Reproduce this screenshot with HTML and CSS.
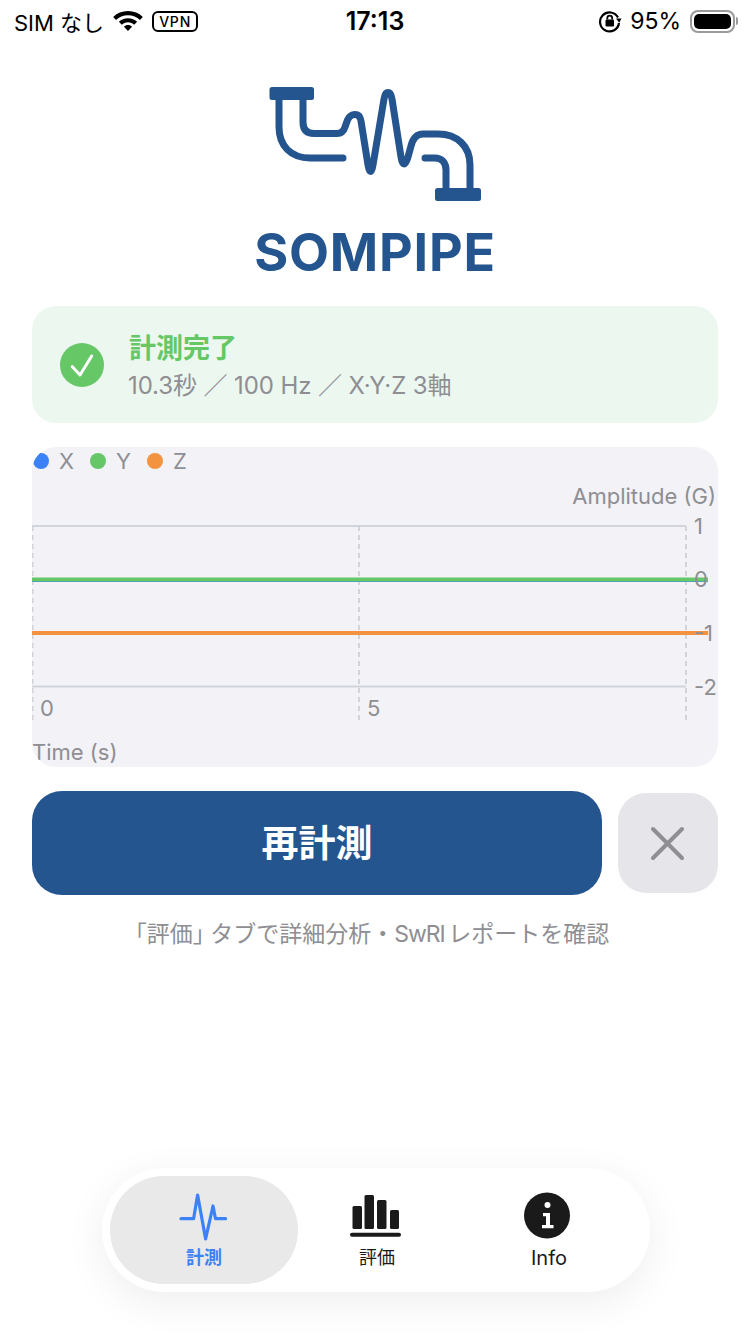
FILE: index.html
```html
<!DOCTYPE html>
<html lang="ja">
<head>
<meta charset="utf-8">
<title>SOMPIPE</title>
<link rel="stylesheet" href="styles.css">
</head>
<body>
<div class="phone">
  <header class="status">
    <div class="status-left">
      <span class="carrier">SIM なし</span>
      <svg class="wifi" viewBox="1 3 28 18.500"><path d="M15 3C9.600 3 4.800 5 1.200 8.400l2.600 2.800C6.700 8.400 10.600 6.800 15 6.800s8.300 1.600 11.200 4.400l2.600-2.800C25.200 5 20.400 3 15 3z"/><path d="M15 9.600c-3.300 0-6.300 1.300-8.500 3.400l2.700 2.800c1.500-1.400 3.500-2.300 5.800-2.300s4.300.9 5.800 2.300l2.700-2.800c-2.200-2.100-5.200-3.400-8.500-3.400z"/><path d="M15 16c-1.500 0-2.800.6-3.800 1.500L15 21.500l3.800-4c-1-.9-2.300-1.500-3.800-1.500z"/></svg>
      <span class="vpn">VPN</span>
    </div>
    <div class="clock">17:13</div>
    <div class="status-right">
      <svg class="rotlock" viewBox="0 0 24 24"><path class="rot-ring" d="M20 8.500A9.500 9.500 0 1 0 21 14"/><path class="rot-head" d="M18 9.500h5.500l-2.200 4.200z"/><rect class="rot-body" x="7.500" y="10.500" width="8.500" height="7" rx="1.200"/><path class="rot-ring thin" d="M9.300 10.500V9a2.450 2.450 0 0 1 4.900 0v1.500"/></svg>
      <span class="pct">95%</span>
      <div class="battery"><div class="battery-fill"></div></div>
      <div class="battery-nub"></div>
    </div>
  </header>

  <main class="content">
    <svg class="logo" viewBox="269 87 212 114">
      <rect class="logo-flange" x="269.500" y="87" width="44.500" height="13" rx="2.500"/>
      <rect class="logo-flange" x="435" y="188" width="46" height="13" rx="2.500"/>
      <path class="logo-line" d="M279 98V127C279 146 291 158 310 158H343"/>
      <path class="logo-line" d="M303 98V122Q303 133.500 314 133.500H337Q343 133.500 345 127L347.500 120Q350 114.500 355 114.500Q360 114.500 361 121L368 165Q369 171.500 370.500 171.500Q372 171.500 373 165L384 99Q385 92.500 388 92.500Q391 92.500 392 99L401 157Q402 164 404 164Q406 164 408 157L411 146Q414 134 423 134H438C457 134 470 146 470 165V190"/>
      <path class="logo-line" d="M425 158H435C442 158 446 163 446 170V190"/>
    </svg>
    <h1 class="brand">SOMPIPE</h1>

    <section class="result">
      <svg class="check" viewBox="0 0 44 44"><circle class="check-bg" cx="22" cy="22" r="22"/><path class="check-mark" d="M12.300 23.700L20 32L31.700 13"/></svg>
      <div class="result-text">
        <div class="result-title">計測完了</div>
        <div class="result-sub">10.3秒 ／ 100 Hz ／ X·Y·Z 3軸</div>
      </div>
    </section>

    <section class="chart">
      <div class="legend">
        <span class="legend-item"><i class="dot dot-x"></i>X</span>
        <span class="legend-item"><i class="dot dot-y"></i>Y</span>
        <span class="legend-item"><i class="dot dot-z"></i>Z</span>
      </div>
      <svg class="plot" viewBox="0 0 686 320">
        <path class="grid-solid" d="M0 79H654M0 239.500H654"/>
        <path class="grid-dash" d="M.5 79V275M327 79V275M654 79V275"/>
        <path class="trace trace-x" d="M0 133H676"/>
        <path class="trace trace-y" d="M0 132.500H676"/>
        <path class="trace trace-z" d="M0 186H676"/>
        <text class="axis-title" x="684" y="57" text-anchor="end">Amplitude (G)</text>
        <text class="axis-num" x="662" y="87">1</text>
        <text class="axis-num" x="662" y="140">0</text>
        <text class="axis-num" x="662" y="194">-1</text>
        <text class="axis-num" x="662" y="248">-2</text>
        <text class="axis-num" x="8" y="269">0</text>
        <text class="axis-num" x="335" y="269">5</text>
        <text class="axis-title" x="0" y="313">Time (s)</text>
      </svg>
    </section>

    <div class="actions">
      <button class="primary">再計測</button>
      <button class="close" aria-label="閉じる"><svg viewBox="0 0 100 100"><path d="M35 36L64 65M64 36L35 65"/></svg></button>
    </div>
    <p class="hint">「評価<span class="hint-close">」</span>タブで詳細分析・<span class="hint-latin">SwRI</span> レポートを確認</p>
  </main>

  <nav class="tabs">
    <div class="tab tab-active">
      <svg class="tab-icon" viewBox="0 0 50 50"><path class="pulse" d="M2 26.700H14.600L18.600 3L26.600 47L34 14L36.500 26.700H46.600"/></svg>
      <span class="tab-label">計測</span>
    </div>
    <div class="tab tab-mid">
      <svg class="tab-icon" viewBox="0 0 56 50"><rect x="3.500" y="14" width="9.500" height="23" rx="1.500"/><rect x="15.500" y="3" width="9.500" height="34" rx="1.500"/><rect x="28" y="8" width="9.500" height="29" rx="1.500"/><rect x="41" y="18" width="9" height="19" rx="1.500"/><rect x="1" y="40.700" width="51" height="4" rx="2"/></svg>
      <span class="tab-label">評価</span>
    </div>
    <div class="tab tab-end">
      <svg class="tab-icon" viewBox="0 0 50 50"><circle cx="23" cy="23.500" r="23"/><circle class="info-i" cx="23.500" cy="13" r="3"/><path class="info-i" d="M19 21h7v12h3.500v3.300H18V33h4v-8.700h-3z"/></svg>
      <span class="tab-label">Info</span>
    </div>
  </nav>
</div>
</body>
</html>
```

FILE: styles.css
```css
* { box-sizing: border-box; }
html, body { margin: 0; padding: 0; background: #fff; }
body { font-family: Inter, "Noto Sans CJK JP", sans-serif; color: #000; }
.phone { width: 750px; height: 1334px; display: flex; flex-direction: column; overflow: hidden; position: relative; }

.status { height: 42px; display: grid; grid-template-columns: 1fr auto 1fr; align-items: center; padding: 0 12px 0 14px; flex: none; }
.status-left { display: flex; align-items: center; }
.carrier { font-size: 22px; }
.wifi { width: 30px; height: 22px; margin-left: 9px; fill: #000; }
.vpn { margin-left: 9px; width: 46px; height: 21px; border: 2px solid #000; border-radius: 6px; font-size: 14px; font-weight: 500; line-height: 17px; text-align: center; letter-spacing: .8px; }
.clock { font-size: 25px; font-weight: 600; margin-right: 2px; }
.status-right { display: flex; align-items: center; justify-content: flex-end; }
.rotlock { width: 24px; height: 24px; margin-right: 8px; }
.rot-ring { fill: none; stroke: #000; stroke-width: 2.200; }
.rot-ring.thin { stroke-width: 1.800; }
.rot-head, .rot-body { fill: #000; }
.pct { font-size: 23px; margin-right: 9px; }
.battery { width: 45px; height: 23px; border: 2px solid #9a9a9a; border-radius: 8px; padding: 2px; }
.battery-fill { width: 100%; height: 100%; background: #000; border-radius: 5px; }
.battery-nub { width: 2px; height: 8px; background: #9a9a9a; border-radius: 0 2px 2px 0; margin-left: 1px; }

.content { padding: 0 32px; display: flex; flex-direction: column; flex: none; }
.logo { display: block; width: 212px; height: 114px; margin: 45px auto 0 237px; }
.logo-flange { fill: #25558f; }
.logo-line { fill: none; stroke: #25558f; stroke-width: 7; stroke-linecap: round; stroke-linejoin: round; }
.brand { margin: 22px 0 0; height: 60px; line-height: 60px; text-align: center; font-family: Inter, sans-serif; font-size: 52px; font-weight: 700; letter-spacing: .8px; color: #25558f; }

.result { margin-top: 23px; height: 117px; border-radius: 24px; background: #ebf7ef; display: flex; align-items: center; padding: 0 28px; }
.check { width: 44px; height: 44px; flex: none; }
.check-bg { fill: #66c767; }
.check-mark { fill: none; stroke: #fff; stroke-width: 3; stroke-linecap: round; stroke-linejoin: round; }
.result-text { margin-left: 24px; padding-top: 2px; }
.result-title { font-size: 27px; line-height: 36px; font-weight: 700; color: #66c767; margin-left: 1px; }
.result-sub { font-size: 24px; line-height: 30px; margin-top: 4px; letter-spacing: -.1px; color: #8e8e93; }

.chart { margin-top: 24px; height: 320px; border-radius: 24px; background: #f2f2f7; overflow: hidden; position: relative; }
.legend { display: flex; padding: 2px 0 0 1px; position: relative; z-index: 1; }
.legend-item { display: flex; align-items: center; font-size: 22px; line-height: 24px; color: #8e8e93; margin-right: 16px; }
.dot { width: 16px; height: 16px; border-radius: 50%; margin-right: 10px; }
.dot-x { background: #3b82f6; }
.dot-y { background: #66c767; }
.dot-z { background: #f39340; }
.plot { position: absolute; left: 0; top: 0; width: 686px; height: 320px; }
.grid-solid { fill: none; stroke: #d1d5db; stroke-width: 2; }
.grid-dash { fill: none; stroke: #d1d5db; stroke-width: 2; stroke-dasharray: 5 4; }
.trace { fill: none; stroke-width: 4; }
.trace-x { stroke: #3b82f6; }
.trace-y { stroke: #66c767; }
.trace-z { stroke: #f39340; }
.axis-title, .axis-num { font-size: 22px; fill: #8e8e93; }

.actions { margin-top: 24px; display: flex; align-items: center; gap: 16px; }
.primary { width: 570px; height: 104px; border: 0; border-radius: 30px; background: #25558f; color: #fff; font-family: inherit; font-size: 37px; font-weight: 700; padding: 0 0 4px; }
.close { width: 100px; height: 100px; border: 0; border-radius: 28px; background: #e5e5ea; padding: 0; }
.close svg { display: block; width: 100px; height: 100px; }
.close path { fill: none; stroke: #8e8e93; stroke-width: 4; stroke-linecap: round; }
.hint { margin: 24px 0 0; padding-right: 17px; text-align: center; font-size: 23px; line-height: 30px; word-spacing: -3px; color: #8e8e93; }
.hint-close { font-feature-settings: "halt"; margin-right: 6px; }
.hint-latin { letter-spacing: -1px; }

.tabs { margin: auto 0 42px 102px; width: 548px; height: 124px; padding: 8px; border-radius: 62px; background: #fff; box-shadow: 0 10px 40px rgba(0, 0, 0, .07); display: flex; flex: none; }
.tab { display: flex; flex-direction: column; align-items: center; justify-content: flex-start; height: 108px; padding-top: 16px; }
.tab-active { width: 188px; background: #e9e9e9; border-radius: 54px; }
.tab-mid { width: 158px; }
.tab-end { width: 186px; }
.tab-icon { width: 50px; height: 50px; display: block; fill: #1a1a1a; }
.tab-mid .tab-icon { width: 56px; }
.pulse { fill: none; stroke: #3b82f6; stroke-width: 3.200; stroke-linecap: round; stroke-linejoin: round; }
.info-i { fill: #fff; }
.tab-label { margin-top: 3px; font-size: 18px; line-height: 26px; font-weight: 400; color: #1a1a1a; }
.tab-end .tab-label { font-size: 20px; }
.tab-active .tab-label { color: #3b82f6; font-weight: 700; }
```
